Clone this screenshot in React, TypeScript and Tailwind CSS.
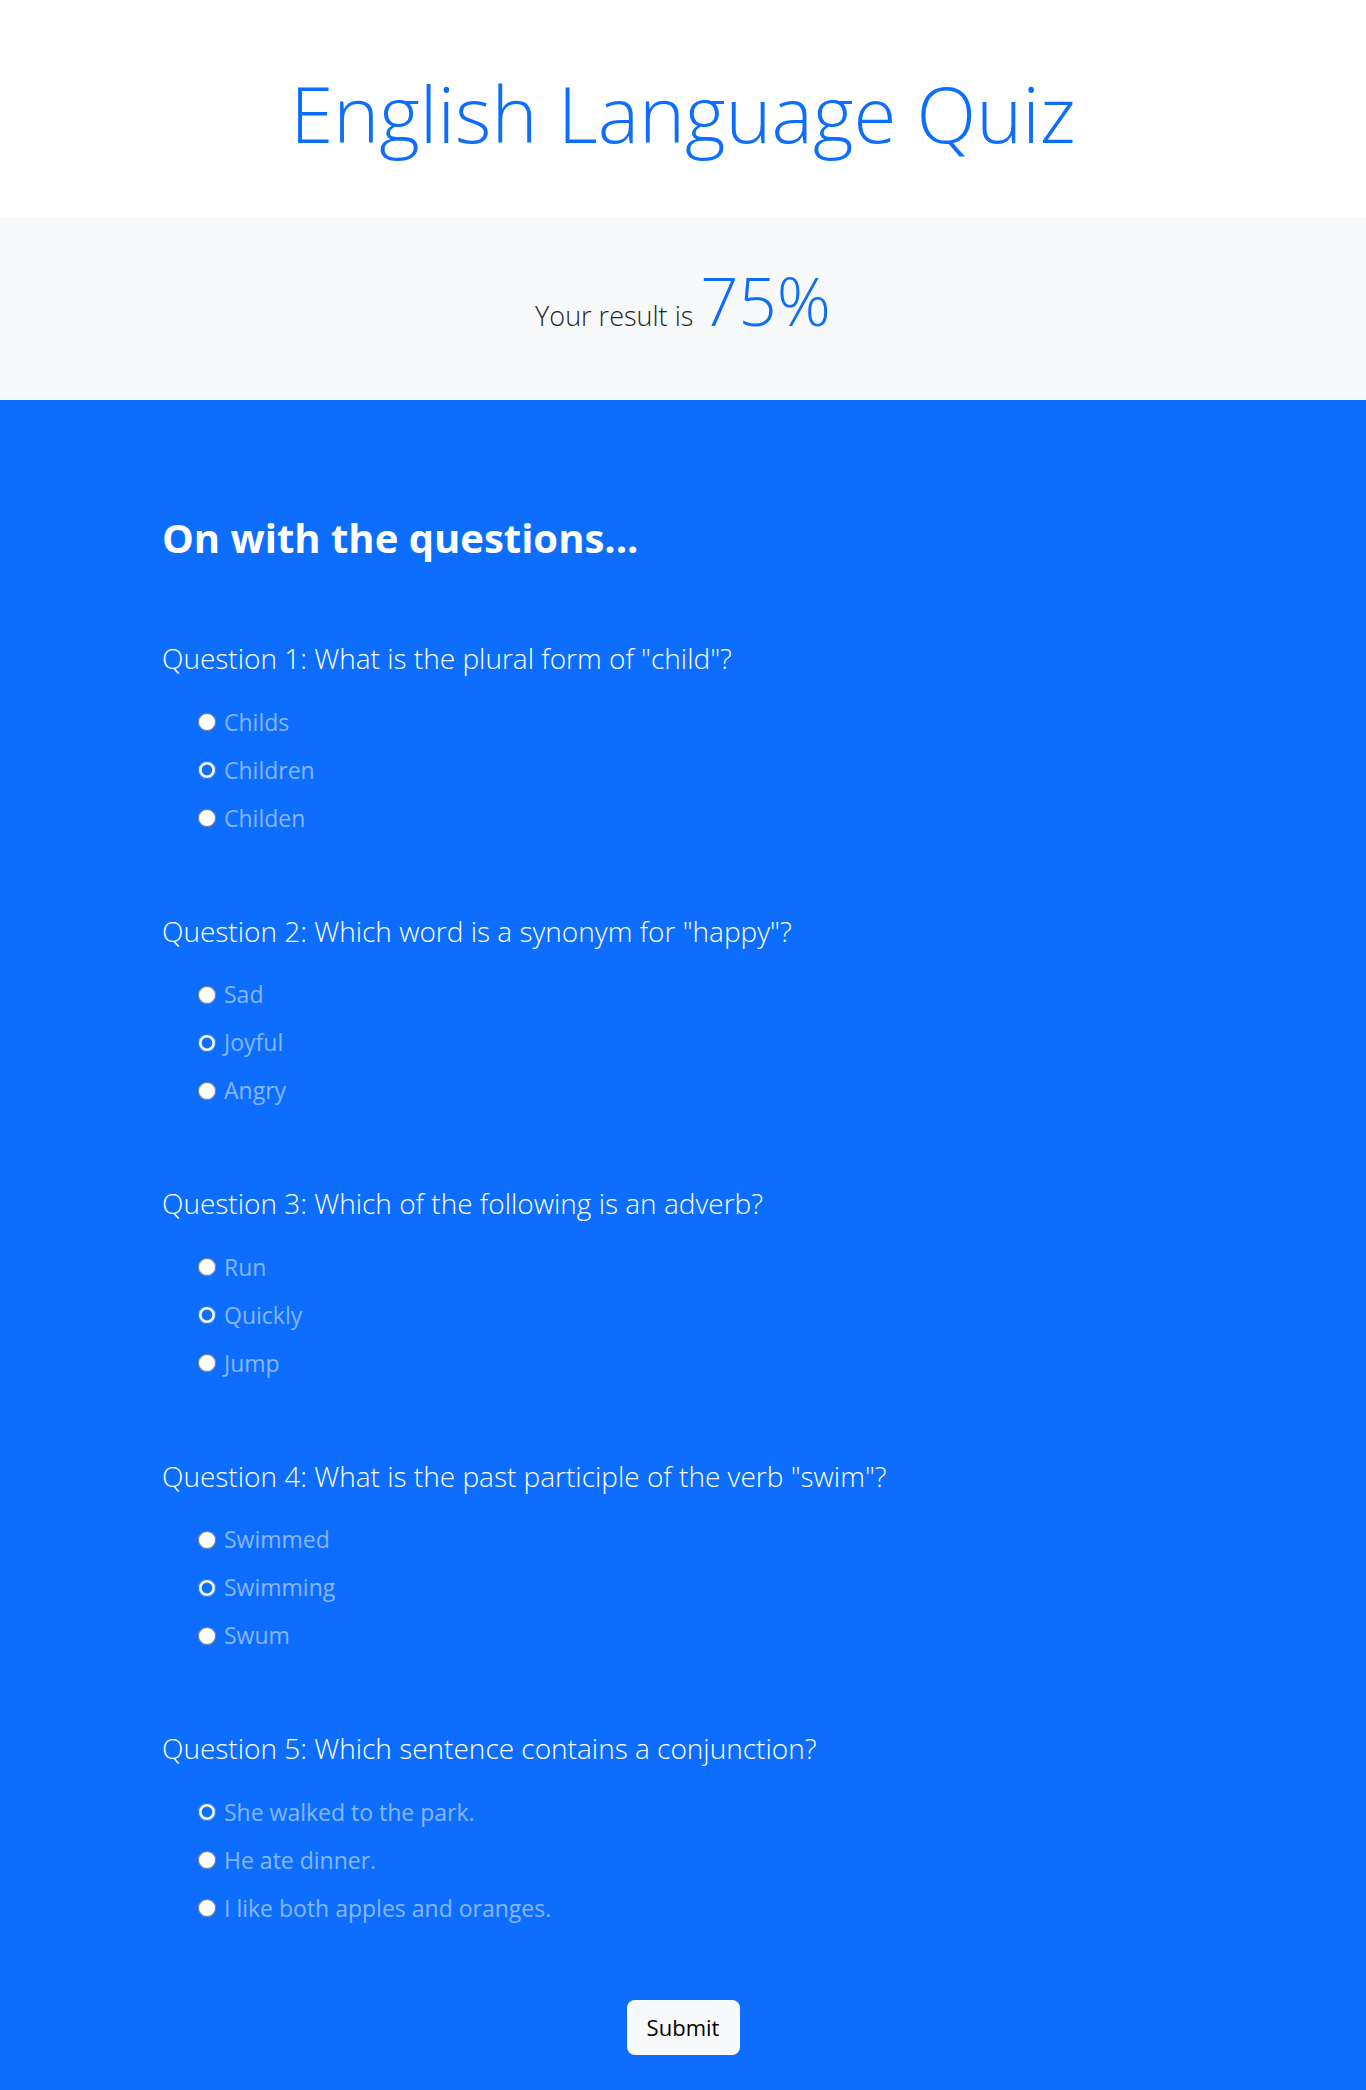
import React, { useState } from "react";

type Question = {
  id: number;
  text: string;
  options: string[];
  picked: number;
};

const questions: Question[] = [
  { id: 1, text: 'What is the plural form of "child"?', options: ["Childs", "Children", "Childen"], picked: 1 },
  { id: 2, text: 'Which word is a synonym for "happy"?', options: ["Sad", "Joyful", "Angry"], picked: 1 },
  { id: 3, text: "Which of the following is an adverb?", options: ["Run", "Quickly", "Jump"], picked: 1 },
  { id: 4, text: 'What is the past participle of the verb "swim"?', options: ["Swimmed", "Swimming", "Swum"], picked: 1 },
  {
    id: 5,
    text: "Which sentence contains a conjunction?",
    options: ["She walked to the park.", "He ate dinner.", "I like both apples and oranges."],
    picked: 0,
  },
];

const QuestionBlock = ({ q, value, onPick }: { q: Question; value: number; onPick: (i: number) => void }) => (
  <div className="flex flex-col">
    <p className="text-[28px] leading-none font-light text-white">
      Question {q.id}: {q.text}
    </p>
    <div className="flex flex-col mt-[26px]">
      {q.options.map((opt, i) => (
        <label key={opt} className="flex items-center h-12 pl-[36px] gap-2 cursor-pointer">
          <input
            type="radio"
            name={`q${q.id}`}
            checked={value === i}
            onChange={() => onPick(i)}
            className="w-[18px] h-[18px] m-0 accent-[#0d6efd]"
          />
          <span className="text-[23px] leading-none text-white/50">{opt}</span>
        </label>
      ))}
    </div>
  </div>
);

export default function App() {
  const [answers, setAnswers] = useState<number[]>(questions.map((q) => q.picked));

  const pick = (qi: number, oi: number) => {
    const next = [...answers];
    next[qi] = oi;
    setAnswers(next);
  };

  return (
    <div className="min-h-[2090px] flex flex-col font-['Open_Sans',sans-serif] text-[#212529]">
      <header className="h-[217px] bg-white pt-[74px]">
        <h1 className="text-center text-[78px] leading-none font-light text-[#0d6efd]">English Language Quiz</h1>
      </header>

      <section className="h-[183px] bg-[#f8f9fa] pt-[50px]">
        <p className="text-center text-[27px] leading-none font-light">
          Your result is <span className="text-[67px] text-[#0d6efd]">75%</span>
        </p>
      </section>

      <main className="flex-1 bg-[#0d6efd] pt-[118px] pb-[37px]">
        <div className="px-[162px]">
          <h2 className="text-[40px] leading-none font-bold text-white">On with the questions...</h2>
          <form
            className="flex flex-col gap-[74.5px] mt-[86px]"
            onSubmit={(e) => e.preventDefault()}
          >
            {questions.map((q, qi) => (
              <QuestionBlock key={q.id} q={q} value={answers[qi]} onPick={(i) => pick(qi, i)} />
            ))}
            <div className="flex justify-center -mt-[7px]">
              <button
                type="submit"
                className="w-[113px] h-[55px] rounded-[8px] bg-[#f8f9fa] text-[22px] text-black"
              >
                Submit
              </button>
            </div>
          </form>
        </div>
      </main>
    </div>
  );
}
